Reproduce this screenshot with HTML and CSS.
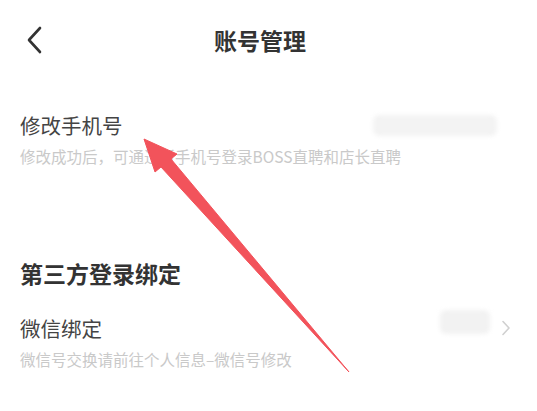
FILE: index.html
```html
<!DOCTYPE html>
<html lang="zh-CN">
<head>
<meta charset="utf-8">
<title>账号管理</title>
<link rel="stylesheet" href="styles.css">
</head>
<body>
<div class="page">
  <header class="nav">
    <div class="nav-left">
      <svg class="back" width="18" height="28" viewBox="0 0 18 28"><path d="M15 2 L4 14 L15 26" fill="none" stroke="#333" stroke-width="2.6" stroke-linecap="round" stroke-linejoin="round"/></svg>
    </div>
    <h1 class="nav-title">账号管理</h1>
    <div class="nav-right"></div>
  </header>
  <main class="content">
    <section class="item item-phone">
      <div class="item-row">
        <div class="item-title">修改手机号</div>
        <div class="blur blur-phone"></div>
      </div>
      <div class="item-desc">修改成功后，可通过新手机号登录BOSS直聘和店长直聘</div>
    </section>
    <h2 class="section-title">第三方登录绑定</h2>
    <section class="item item-wx">
      <div class="item-row">
        <div class="item-title">微信绑定</div>
        <div class="row-right">
          <div class="blur blur-wx"></div>
          <svg class="chev" width="10" height="16" viewBox="0 0 10 16"><path d="M2 1.5 L8 8 L2 14.5" fill="none" stroke="#d0d0d0" stroke-width="1.6" stroke-linecap="round" stroke-linejoin="round"/></svg>
        </div>
      </div>
      <div class="item-desc">微信号交换请前往个人信息–微信号修改</div>
    </section>
  </main>
  <svg class="arrow" width="537" height="411" viewBox="0 0 537 411">
    <path d="M144 139 L177 154 L171 159 L349 372 L161 167 L155 172 Z" fill="#f2535b" stroke="#f2535b" stroke-width="1" stroke-linejoin="round"/>
  </svg>
</div>
</body>
</html>
```
FILE: styles.css
```css
* { box-sizing: border-box; }
html, body { margin: 0; padding: 0; background: #fff; }
body {
  font-family: "Noto Sans CJK SC", "Noto Sans", sans-serif;
  color: #333;
  width: 537px;
  height: 411px;
  overflow: hidden;
}
.page { position: relative; width: 537px; height: 411px; }
.nav {
  height: 80px;
  display: grid;
  grid-template-columns: 1fr auto 1fr;
  align-items: center;
  padding-right: 17px;
}
.nav-left { padding-left: 25px; display: flex; align-items: center; }
.back { display: block; }
.nav-title {
  margin: 0;
  font-size: 23px;
  line-height: 30px;
  font-weight: 700;
  color: #333;
}
.content { padding: 0 40px 0 20px; }
.item-phone { margin-top: 31px; }
.item-row {
  display: flex;
  align-items: center;
  justify-content: space-between;
}
.item-title {
  font-size: 20.5px;
  line-height: 28px;
  color: #444;
}
.item-desc {
  margin-top: 7px;
  font-size: 15.5px;
  line-height: 20px;
  color: #c9c9c9;
}
.blur {
  background: #f3f3f3;
  border-radius: 6px;
  filter: blur(2px);
}
.blur-phone { width: 124px; height: 21px; }
.section-title {
  margin: 92px 0 0;
  font-size: 23px;
  line-height: 30px;
  font-weight: 700;
  color: #333;
}
.item-wx { margin-top: 22px; }
.item-wx .item-desc { margin-top: 3px; }
.row-right {
  display: flex;
  align-items: center;
  gap: 11px;
  margin-right: -14px;
}
.blur-wx { width: 50px; height: 24px; margin-bottom: 12px; background: #f2f2f2; }
.chev { display: block; }
.arrow {
  position: absolute;
  left: 0;
  top: 0;
  pointer-events: none;
}
```
